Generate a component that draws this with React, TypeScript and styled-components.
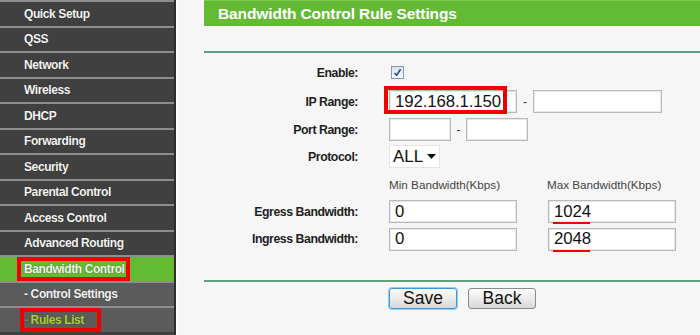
import React from "react";
import styled, { createGlobalStyle } from "styled-components";

const GlobalStyle = createGlobalStyle`
  html, body {
    margin: 0;
    padding: 0;
    background: #f6f6f6;
  }
  body {
    font-family: "Liberation Sans", Arial, sans-serif;
  }
`;

const Page = styled.div`
  display: flex;
  width: 700px;
  height: 335px;
  overflow: hidden;
  background: #f6f6f6;
`;

const Sidebar = styled.nav`
  width: 174px;
  flex: none;
  background: #404040;
  border-right: 2px solid #2f2f2f;
  box-shadow: 2px 0 0 #ffffff;
`;

type ItemKind = "main" | "active" | "sub" | "subActive";

const itemBg: Record<ItemKind, string> = {
  main: "#404040",
  active: "#63ba33",
  sub: "#5b5b5b",
  subActive: "#5b5b5b",
};

const MenuItem = styled.div<{ $kind: ItemKind }>`
  height: 23.5px;
  border-top: 2px solid #8e8e8e;
  display: flex;
  align-items: center;
  padding-left: 24px;
  font-size: 12px;
  font-weight: bold;
  letter-spacing: -0.4px;
  white-space: nowrap;
  background: ${(p) => itemBg[p.$kind]};
  color: ${(p) => (p.$kind === "subActive" ? "#a9d137" : "#f4f4f4")};
  text-shadow: 0 0 1px rgba(0, 0, 0, 0.55);
`;

const Marked = styled.span<{ $left: number; $right: number }>`
  display: inline-flex;
  align-items: center;
  box-sizing: border-box;
  height: 24px;
  border: 4px solid #f20000;
  margin-left: ${(p) => -(p.$left + 4)}px;
  padding: 0 ${(p) => p.$right}px 0 ${(p) => p.$left}px;
`;

const SubDash = styled.span<{ $dim?: boolean }>`
  margin-right: 3px;
  color: ${(p) => (p.$dim ? "#7b8a4a" : "#f4f4f4")};
`;

const Main = styled.main`
  flex: 1;
  padding-left: 28px;
  display: flex;
  flex-direction: column;
`;

const TitleBar = styled.div`
  height: 26px;
  background: #63bb35;
  border-top: 1px solid #7fcc55;
  box-sizing: border-box;
  display: flex;
  align-items: center;
  padding-left: 14px;
  color: #ffffff;
  font-size: 15.5px;
  font-weight: bold;
  letter-spacing: -0.1px;
`;

const Rule = styled.div<{ $top: number }>`
  height: 2px;
  margin-top: ${(p) => p.$top}px;
  background: #5e9f7c;
`;

const Form = styled.div`
  display: grid;
  grid-template-columns: 154px 1fr;
  grid-template-rows: 29px 29px 27px 27px 28px 27px 28px;
  column-gap: 31px;
  margin-top: 5px;
`;

const Label = styled.div`
  align-self: center;
  text-align: right;
  font-size: 12.3px;
  font-weight: bold;
  letter-spacing: -0.45px;
  color: #1e1e1e;
  white-space: nowrap;
`;

const Field = styled.div`
  display: flex;
  align-items: center;
`;

const TextBox = styled.input<{ $w: number }>`
  width: ${(p) => p.$w}px;
  height: 23px;
  box-sizing: border-box;
  margin: 0;
  padding: 0 5px;
  border: 1px solid #b9b9b9;
  box-shadow: inset 0 0 0 1px #e8e8e8;
  background: #fff;
  font-family: "Liberation Sans", Arial, sans-serif;
  font-size: 16.8px;
  letter-spacing: -0.1px;
  color: #111;
  outline: none;
`;

const Dash = styled.span<{ $w: number }>`
  width: ${(p) => p.$w}px;
  text-align: center;
  font-size: 12px;
  color: #333;
`;

const Annotated = styled.div`
  position: relative;
  display: flex;
`;

const RedBox = styled.span`
  position: absolute;
  left: -5px;
  top: -4px;
  width: 123px;
  height: 28px;
  box-sizing: border-box;
  border: 4px solid #f20000;
  pointer-events: none;
`;

const RedUnderline = styled.span`
  position: absolute;
  left: 5px;
  bottom: -1px;
  width: 37px;
  height: 2px;
  background: #f20000;
`;

const CheckBox = styled.span`
  width: 13px;
  height: 13px;
  margin-left: 2px;
  box-sizing: border-box;
  border: 1px solid #8796ae;
  background: linear-gradient(#dce3ee, #f7f9fc);
  display: flex;
  align-items: center;
  justify-content: center;
`;

const Select = styled.div`
  width: 51px;
  height: 23px;
  box-sizing: border-box;
  border: 1px solid #e4e4e4;
  background: #fff;
  display: flex;
  align-items: center;
  justify-content: space-between;
  padding: 0 3px 0 3px;
  font-size: 17px;
  color: #111;
`;

const ColHead = styled.span<{ $w?: number }>`
  width: ${(p) => (p.$w ? `${p.$w}px` : "auto")};
  font-size: 11.7px;
  color: #444;
  white-space: nowrap;
`;

const BwGap = styled.span`
  width: 31px;
`;

const Buttons = styled.div`
  display: flex;
  gap: 11px;
  margin-top: 6px;
  padding-left: 185px;
`;

const Button = styled.button<{ $focused?: boolean }>`
  width: 68px;
  height: 21px;
  margin: 0;
  padding: 0;
  border-radius: 3px;
  border: 1px solid ${(p) => (p.$focused ? "#3d98da" : "#8a8a8a")};
  box-shadow: ${(p) => (p.$focused ? "0 0 0 1px #9ccbf0" : "none")};
  background: linear-gradient(#fdfdfd, #d8d8d8);
  font-family: "Liberation Sans", Arial, sans-serif;
  font-size: 17.5px;
  line-height: 19px;
  color: #111;
`;

const menu: { text: string; kind: ItemKind }[] = [
  { text: "Quick Setup", kind: "main" },
  { text: "QSS", kind: "main" },
  { text: "Network", kind: "main" },
  { text: "Wireless", kind: "main" },
  { text: "DHCP", kind: "main" },
  { text: "Forwarding", kind: "main" },
  { text: "Security", kind: "main" },
  { text: "Parental Control", kind: "main" },
  { text: "Access Control", kind: "main" },
  { text: "Advanced Routing", kind: "main" },
  { text: "Bandwidth Control", kind: "active" },
  { text: "Control Settings", kind: "sub" },
  { text: "Rules List", kind: "subActive" },
];

function MenuLabel({ text, kind }: { text: string; kind: ItemKind }) {
  if (kind === "active") {
    return (
      <Marked $left={3} $right={1}>
        {text}
      </Marked>
    );
  }
  if (kind === "subActive") {
    return (
      <Marked $left={0} $right={13}>
        <SubDash $dim>-</SubDash>
        {text}
      </Marked>
    );
  }
  if (kind === "sub") {
    return (
      <>
        <SubDash>-</SubDash>
        {text}
      </>
    );
  }
  return <>{text}</>;
}

export default function App() {
  return (
    <Page>
      <GlobalStyle />
      <Sidebar>
        {menu.map((m) => (
          <MenuItem key={m.text} $kind={m.kind}>
            <MenuLabel text={m.text} kind={m.kind} />
          </MenuItem>
        ))}
      </Sidebar>
      <Main>
        <TitleBar>Bandwidth Control Rule Settings</TitleBar>
        <Rule $top={25} />
        <Form>
          <Label>Enable:</Label>
          <Field>
            <CheckBox>
              <svg width="9" height="9" viewBox="0 0 9 9">
                <path d="M1.5 5 L3.6 7.3 L7.6 1.2" fill="none" stroke="#2b4a8c" strokeWidth="1.6" />
              </svg>
            </CheckBox>
          </Field>

          <Label>IP Range:</Label>
          <Field>
            <Annotated>
              <TextBox $w={128} readOnly value="192.168.1.150" />
              <RedBox />
            </Annotated>
            <Dash $w={16}>-</Dash>
            <TextBox $w={129} readOnly value="" />
          </Field>

          <Label>Port Range:</Label>
          <Field>
            <TextBox $w={62} readOnly value="" />
            <Dash $w={15}>-</Dash>
            <TextBox $w={62} readOnly value="" />
          </Field>

          <Label>Protocol:</Label>
          <Field>
            <Select>
              <span>ALL</span>
              <svg width="9" height="5" viewBox="0 0 9 5">
                <path d="M0 0 H9 L4.5 5 Z" fill="#111" />
              </svg>
            </Select>
          </Field>

          <span />
          <Field>
            <ColHead $w={158}>Min Bandwidth(Kbps)</ColHead>
            <ColHead>Max Bandwidth(Kbps)</ColHead>
          </Field>

          <Label>Egress Bandwidth:</Label>
          <Field>
            <TextBox $w={128} readOnly value="0" />
            <BwGap />
            <Annotated>
              <TextBox $w={128} readOnly value="1024" />
              <RedUnderline />
            </Annotated>
          </Field>

          <Label>Ingress Bandwidth:</Label>
          <Field>
            <TextBox $w={128} readOnly value="0" />
            <BwGap />
            <Annotated>
              <TextBox $w={128} readOnly value="2048" />
              <RedUnderline />
            </Annotated>
          </Field>
        </Form>
        <Rule $top={27} />
        <Buttons>
          <Button $focused>Save</Button>
          <Button>Back</Button>
        </Buttons>
      </Main>
    </Page>
  );
}
